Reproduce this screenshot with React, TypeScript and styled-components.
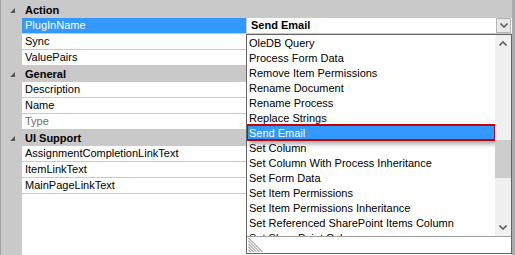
import React from "react";
import styled, { createGlobalStyle } from "styled-components";

const GRID_GREY = "#c9c9c9";
const LINE_GREY = "#c9c9c9";
const SELECT_BLUE = "#3399ff";

const GlobalStyle = createGlobalStyle`
  html, body {
    margin: 0;
    padding: 0;
    background: #fff;
  }
  body {
    font-family: "Liberation Sans", Arial, sans-serif;
    font-size: 11px;
    color: #000;
  }
`;

const Frame = styled.div`
  position: relative;
  width: 515px;
  height: 255px;
  box-sizing: border-box;
  border-left: 1px solid #a0a0a0;
  border-right: 3px solid #ababab;
  padding-top: 2px;
  background: ${GRID_GREY};
  display: flex;
  flex-direction: column;
  overflow: hidden;
`;

const CategoryRow = styled.div`
  display: flex;
  align-items: center;
  height: 16px;
  background: ${GRID_GREY};
  font-weight: bold;
`;

const Glyph = styled.div`
  width: 21px;
  height: 16px;
  display: flex;
  align-items: center;
  padding-left: 9px;
  box-sizing: border-box;
`;

const CategoryLabel = styled.span`
  padding-left: 3px;
  line-height: 16px;
`;

const PropertyRow = styled.div`
  display: grid;
  grid-template-columns: 21px 225px 1fr;
  height: 16px;
`;

const MarginCell = styled.div`
  background: ${GRID_GREY};
`;

const NameCell = styled.div<{ $selected?: boolean; $disabled?: boolean }>`
  box-sizing: border-box;
  height: 16px;
  line-height: 15px;
  padding-left: 3px;
  border-bottom: 1px solid ${LINE_GREY};
  border-right: 1px solid ${LINE_GREY};
  background: ${(p) => (p.$selected ? SELECT_BLUE : "#fff")};
  color: ${(p) => (p.$selected ? "#fff" : p.$disabled ? "#6d6d6d" : "#000")};
  white-space: nowrap;
  overflow: hidden;
`;

const ValueCell = styled.div`
  box-sizing: border-box;
  height: 16px;
  border-bottom: 1px solid ${LINE_GREY};
  background: #fff;
  display: flex;
  align-items: center;
`;

const ValueText = styled.span`
  flex: 1;
  padding-left: 4px;
  font-weight: bold;
  line-height: 15px;
`;

const DropButton = styled.div`
  width: 15px;
  height: 15px;
  box-sizing: border-box;
  border: 1px solid #b4b4b4;
  background: #e8e8e8;
  display: flex;
  align-items: center;
  justify-content: center;
  margin-right: 1px;
`;

const Filler = styled.div`
  flex: 1;
  background: #fff;
  border-left: 21px solid ${GRID_GREY};
`;

const DropList = styled.div`
  position: absolute;
  left: 245px;
  top: 34px;
  width: 266px;
  height: 220px;
  box-sizing: border-box;
  border: 1px solid #646464;
  background: #fff;
  display: flex;
  flex-direction: column;
`;

const ListBody = styled.div`
  display: flex;
  height: 201px;
`;

const Items = styled.div`
  flex: 1;
  overflow: hidden;
`;

const Item = styled.div<{ $highlight?: boolean }>`
  box-sizing: border-box;
  height: 15px;
  padding: 1px 0 0 2px;
  line-height: 14px;
  white-space: nowrap;
  ${(p) =>
    p.$highlight &&
    `
    position: relative;
    background: ${SELECT_BLUE};
    color: #fff;
    outline: 2px solid #c4000b;
    outline-offset: -1px;
    box-shadow: 2px 4px 5px rgba(0, 0, 0, 0.35);
  `}
`;

const ScrollBar = styled.div`
  width: 16px;
  background: #f0f0f0;
  display: flex;
  flex-direction: column;
`;

const ScrollArrow = styled.div`
  height: 17px;
  display: flex;
  align-items: center;
  justify-content: center;
`;

const Track = styled.div`
  flex: 1;
`;

const Thumb = styled.div`
  margin-top: 88px;
  height: 38px;
  background: #cdcdcd;
`;

const GripBar = styled.div`
  flex: 1;
  border-top: 1px solid #a0a0a0;
  display: flex;
  align-items: flex-end;
  padding: 0 0 1px 1px;
`;

const Triangle = () => (
  <svg width="5" height="5" viewBox="0 0 5 5">
    <polygon points="5,0 5,5 0,5" fill="#595959" />
  </svg>
);

const Chevron = ({ up }: { up?: boolean }) => (
  <svg width="8" height="5" viewBox="0 0 8 5">
    <polyline
      points={up ? "0.5,4.5 4,1 7.5,4.5" : "0.5,0.5 4,4 7.5,0.5"}
      fill="none"
      stroke="#606060"
      strokeWidth="1.6"
    />
  </svg>
);

const Grip = () => (
  <svg width="15" height="15" viewBox="0 0 15 15">
    {[0, 3, 6, 9, 12].map((o) => (
      <line key={o} x1="0" y1={o + 0.5} x2={14.5 - o} y2="15" stroke="#7a7a7a" strokeWidth="1" />
    ))}
  </svg>
);

type Prop = { name: string; selected?: boolean; disabled?: boolean; value?: string };
type Category = { title: string; props: Prop[] };

const categories: Category[] = [
  {
    title: "Action",
    props: [{ name: "PlugInName", selected: true, value: "Send Email" }, { name: "Sync" }, { name: "ValuePairs" }],
  },
  {
    title: "General",
    props: [{ name: "Description" }, { name: "Name" }, { name: "Type", disabled: true }],
  },
  {
    title: "UI Support",
    props: [{ name: "AssignmentCompletionLinkText" }, { name: "ItemLinkText" }, { name: "MainPageLinkText" }],
  },
];

const options = [
  "OleDB Query",
  "Process Form Data",
  "Remove Item Permissions",
  "Rename Document",
  "Rename Process",
  "Replace Strings",
  "Send Email",
  "Set Column",
  "Set Column With Process Inheritance",
  "Set Form Data",
  "Set Item Permissions",
  "Set Item Permissions Inheritance",
  "Set Referenced SharePoint Items Column",
  "Set SharePoint Column",
];

export default function App() {
  return (
    <>
      <GlobalStyle />
      <Frame>
        {categories.map((cat) => (
          <React.Fragment key={cat.title}>
            <CategoryRow>
              <Glyph>
                <Triangle />
              </Glyph>
              <CategoryLabel>{cat.title}</CategoryLabel>
            </CategoryRow>
            {cat.props.map((p) => (
              <PropertyRow key={p.name}>
                <MarginCell />
                <NameCell $selected={p.selected} $disabled={p.disabled}>
                  {p.name}
                </NameCell>
                <ValueCell>
                  {p.value && (
                    <>
                      <ValueText>{p.value}</ValueText>
                      <DropButton>
                        <Chevron />
                      </DropButton>
                    </>
                  )}
                </ValueCell>
              </PropertyRow>
            ))}
          </React.Fragment>
        ))}
        <Filler />

        <DropList>
          <ListBody>
            <Items>
              {options.map((o) => (
                <Item key={o} $highlight={o === "Send Email"}>
                  {o}
                </Item>
              ))}
            </Items>
            <ScrollBar>
              <ScrollArrow>
                <Chevron up />
              </ScrollArrow>
              <Track>
                <Thumb />
              </Track>
              <ScrollArrow>
                <Chevron />
              </ScrollArrow>
            </ScrollBar>
          </ListBody>
          <GripBar>
            <Grip />
          </GripBar>
        </DropList>
      </Frame>
    </>
  );
}
